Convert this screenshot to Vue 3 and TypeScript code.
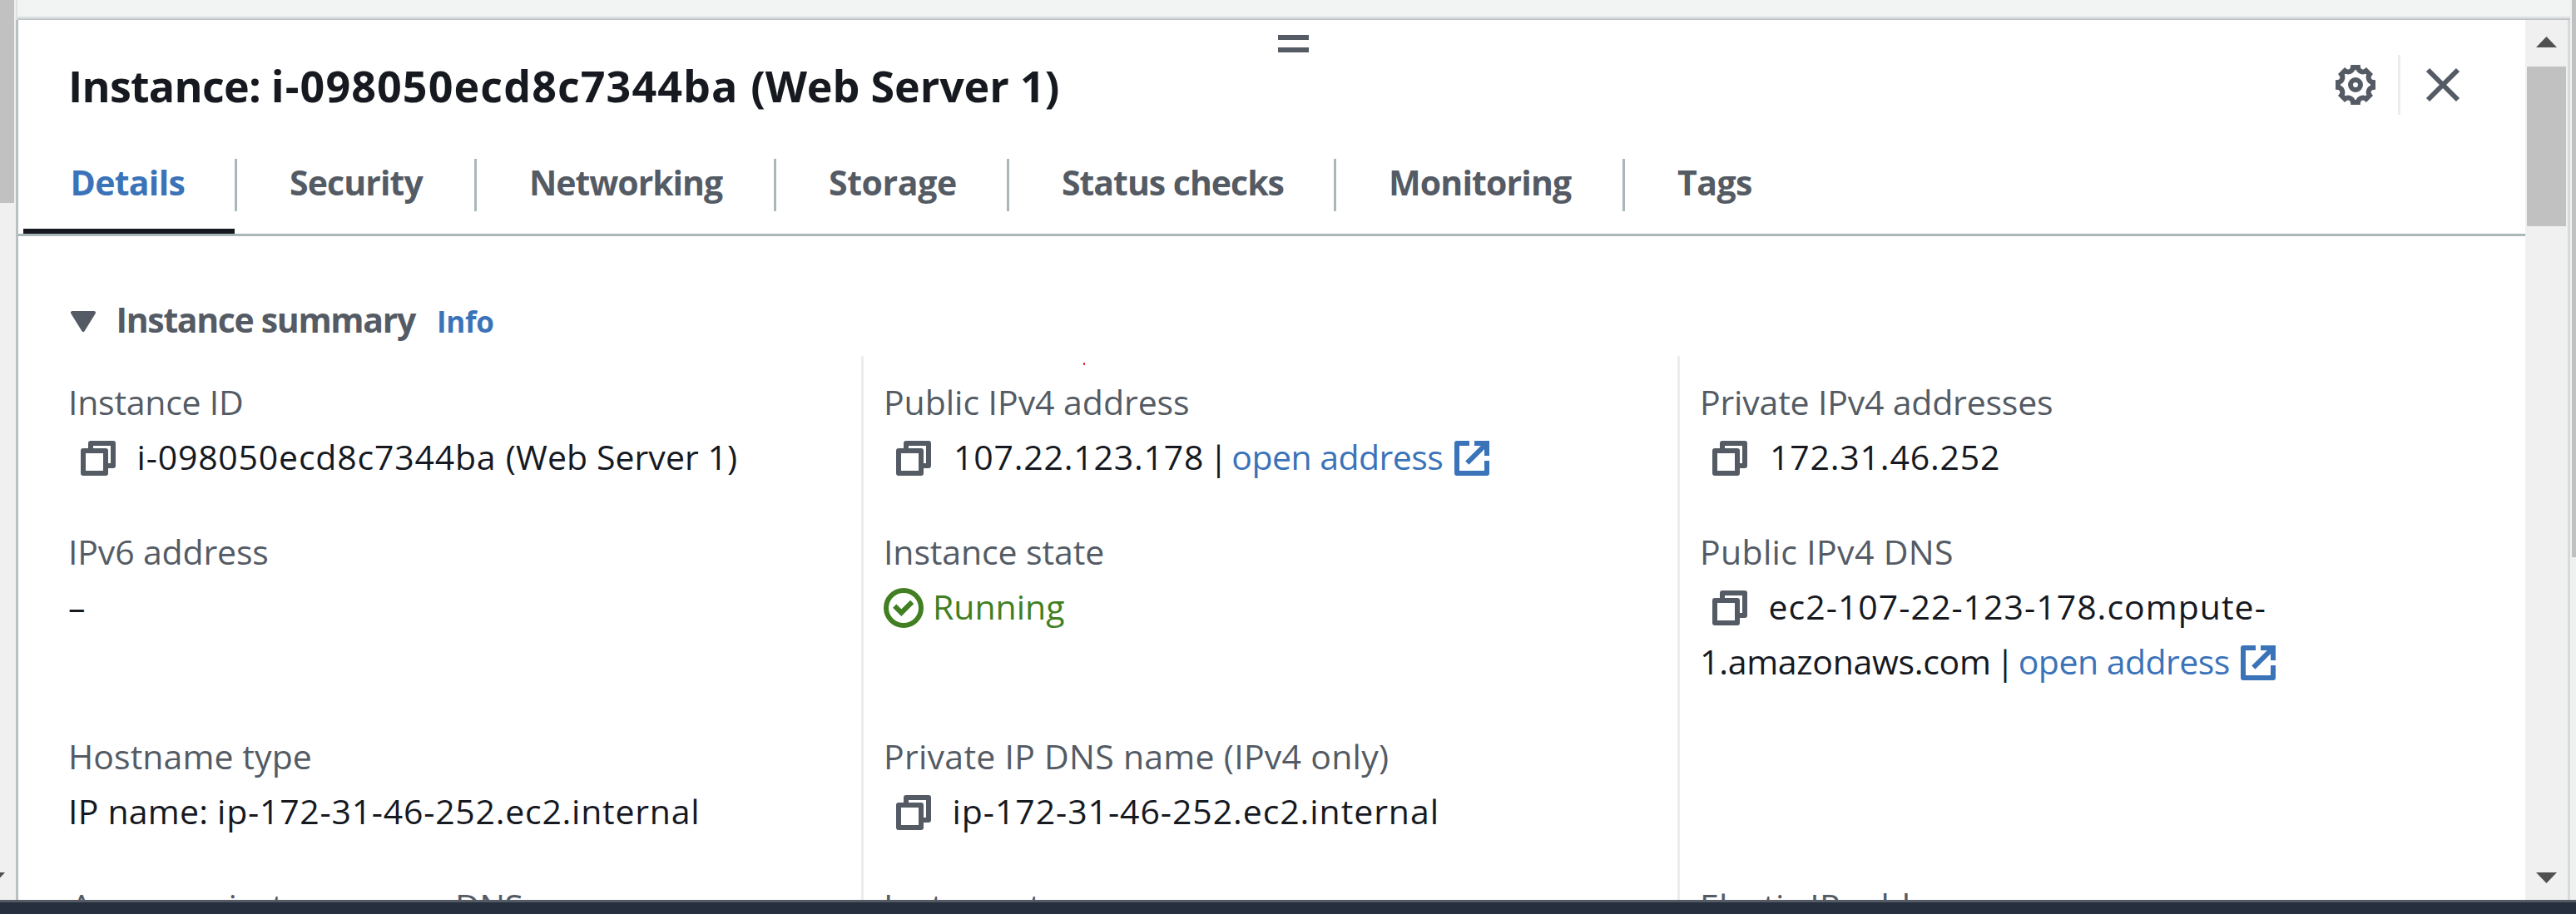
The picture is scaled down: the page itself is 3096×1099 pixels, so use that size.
<script setup lang="ts">
interface Tab { label: string; width: number; track: number; active?: boolean }
interface Run { text: string; track?: number }
interface Line { runs: Run[]; nudge?: number; link?: boolean }
interface Field { label: string; track?: number; nudge?: number; copy?: boolean; status?: boolean; lines: Line[] }

const title: Run[] = [
  { text: 'Instance: ', track: -0.74 },
  { text: 'i-098050ecd8c7344ba ', track: 1.09 },
  { text: '(Web Server 1)', track: -0.13 },
]

const tabs: Tab[] = [
  { label: 'Details', width: 254, track: -0.69, active: true },
  { label: 'Security', width: 285, track: -0.9 },
  { label: 'Networking', width: 357, track: -1.04 },
  { label: 'Storage', width: 277, track: -0.38 },
  { label: 'Status checks', width: 390, track: -1.01 },
  { label: 'Monitoring', width: 344, track: -0.85 },
  { label: 'Tags', width: 220, track: -0.56 },
]

const columns: Field[][] = [
  [
    {
      label: 'Instance ID', track: -0.25, copy: true,
      lines: [{ runs: [{ text: 'i-098050ecd8c7344ba ', track: 0.8 }, { text: '(Web Server 1)', track: 0.07 }] }],
    },
    { label: 'IPv6 address', track: -0.15, lines: [{ runs: [{ text: '–' }] }] },
    {
      label: 'Hostname type', track: 0.08,
      lines: [{ runs: [{ text: 'IP name: ', track: 0.22 }, { text: 'ip-172-31-46-252.ec2.internal', track: 0.75 }] }],
    },
    { label: 'Answer private resource DNS name', track: -0.57, nudge: 3, lines: [] },
  ],
  [
    { label: 'Public IPv4 address', track: -0.04, copy: true, lines: [{ runs: [{ text: '107.22.123.178', track: 0.79 }], nudge: 1.5, link: true }] },
    { label: 'Instance state', track: -0.1, status: true, lines: [{ runs: [{ text: 'Running', track: 0 }] }] },
    { label: 'Private IP DNS name (IPv4 only)', track: 0.27, copy: true, lines: [{ runs: [{ text: 'ip-172-31-46-252.ec2.internal', track: 0.93 }] }] },
    { label: 'Instance type', track: 0.3, lines: [] },
  ],
  [
    { label: 'Private IPv4 addresses', track: -0.18, copy: true, lines: [{ runs: [{ text: '172.31.46.252', track: 0.81 }], nudge: 1.5 }] },
    {
      label: 'Public IPv4 DNS', track: 0.34, copy: true,
      lines: [
        { runs: [{ text: 'ec2-107-22-123-178.compute-', track: 1.02 }] },
        { runs: [{ text: '1.amazonaws.com', track: -0.28 }], link: true },
      ],
    },
    { label: '', lines: [] },
    { label: 'Elastic IP addresses', track: 0.2, lines: [] },
  ],
]

const spacing = (track = 0, nudge = 0) => ({ letterSpacing: `${track}px`, marginLeft: nudge ? `${nudge}px` : undefined })

// Outline of an eight-toothed gear centred in a 48-unit box.
const turn = (x: number, y: number, deg: number) => {
  const a = (deg * Math.PI) / 180
  return `${(24 + x * Math.cos(a) - y * Math.sin(a)).toFixed(2)} ${(24 + x * Math.sin(a) + y * Math.cos(a)).toFixed(2)}`
}
const gear = Array.from({ length: 8 }, (_, k) => {
  const from = k === 0 ? `M${turn(-3, -21, 0)}` : ''
  return `${from}L${turn(3, -21, k * 45)}A6 6 0 0 0 ${turn(-3, -21, (k + 1) * 45)}`
}).join('') + 'Z'
</script>

<template>
  <div class="screen">
    <div class="main">
      <aside class="outer-scroll left">
        <div class="outer-thumb"></div>
        <svg class="outer-arrow" width="6" height="11" viewBox="0 0 6 11"><path d="M0 0H6L0 6.5Z" fill="#505050" /></svg>
      </aside>
      <section class="middle">
        <div class="strip"></div>
        <div class="panel">
          <div class="content">
            <div class="handle"><i></i><i></i></div>
            <header class="head">
              <h1><span v-for="(s, i) in title" :key="i" :style="spacing(s.track)">{{ s.text }}</span></h1>
              <div class="tools">
                <svg class="icon" viewBox="0 0 48 48" fill="none" stroke="currentColor" stroke-width="6">
                  <path :d="gear" />
                  <circle cx="24" cy="24" r="6" />
                </svg>
                <span class="bar"></span>
                <svg class="icon" viewBox="0 0 48 48" fill="none" stroke="currentColor" stroke-width="6">
                  <path d="M6 6L42 42M42 6L6 42" />
                </svg>
              </div>
            </header>
            <nav class="tabs">
              <div v-for="t in tabs" :key="t.label" class="tab" :class="{ active: t.active }" :style="{ width: t.width + 'px' }">
                <span :style="spacing(t.track)">{{ t.label }}</span>
              </div>
            </nav>
            <div class="summary">
              <svg class="caret" width="30" height="25" viewBox="0 0 30 25"><path d="M2 2H28L15 23Z" fill="currentColor" stroke="currentColor" stroke-width="4" stroke-linejoin="round" /></svg>
              <h2>Instance summary</h2>
              <a class="info">Info</a>
            </div>
            <div class="grid">
              <i class="speck"></i>
              <div v-for="(col, c) in columns" :key="c" class="col">
                <div v-for="(f, r) in col" :key="r" class="field">
                  <div class="label"><span :style="spacing(f.track, f.nudge)">{{ f.label }}</span></div>
                  <div v-for="(l, n) in f.lines" :key="n" class="value" :class="{ ok: f.status }">
                    <svg v-if="f.copy && n === 0" class="icon copy" viewBox="0 0 16 16" fill="none" stroke="currentColor" stroke-width="2" stroke-linejoin="round"><path d="M2 5h9v9H2zM5 4V2h9v9h-2" /></svg>
                    <svg v-if="f.status" class="icon check" viewBox="0 0 16 16" fill="none" stroke="currentColor" stroke-width="2"><circle cx="8" cy="8" r="7" /><path d="M4.4 7.2L7.1 9.9L11.4 5.6" /></svg>
                    <span class="text" :style="{ marginLeft: (l.nudge ?? 0) + 'px' }"><span v-for="(s, i) in l.runs" :key="i" :style="spacing(s.track)">{{ s.text }}</span></span>
                    <template v-if="l.link">
                      <span class="pipe">|</span>
                      <a class="open">open address</a>
                      <svg class="icon ext" viewBox="0 0 16 16" fill="none" stroke="currentColor" stroke-width="2"><path d="M7 2H2V14H14V9" stroke-linejoin="round" /><path d="M9 2h5v5M14 2L6.1 9.9" /></svg>
                    </template>
                  </div>
                </div>
              </div>
            </div>
          </div>
          <aside class="inner-scroll">
            <svg width="25" height="13" viewBox="0 0 25 13"><path d="M12.5 0L25 13H0Z" fill="#505050" /></svg>
            <div class="inner-thumb"></div>
            <svg class="down" width="25" height="13" viewBox="0 0 25 13"><path d="M0 0H25L12.5 13Z" fill="#505050" /></svg>
          </aside>
        </div>
      </section>
      <aside class="outer-scroll right"><div class="outer-thumb"></div></aside>
    </div>
    <footer></footer>
  </div>
</template>

<style>
html, body { margin: 0; overflow: hidden; }
</style>

<style scoped>
.screen { width: 3096px; height: 1099px; overflow: hidden; display: flex; flex-direction: column; font-family: "Open Sans", "Noto Sans", sans-serif; color: #16191f; background: #fff; }
.main { height: 1082px; display: flex; overflow: hidden; }
footer { height: 14px; border-top: 3px solid #545b64; background: #262f3d; }

.outer-scroll { background: #f0f0f0; flex: none; box-sizing: border-box; }
.outer-thumb { background: #c1c1c1; }
.left { width: 19px; padding-right: 2px; }
.left .outer-thumb { height: 244px; }
.outer-arrow { display: block; margin-top: 805px; }
.right { width: 7px; padding-left: 2px; }
.right .outer-thumb { height: 670px; }

.middle { width: 3070px; flex: none; }
.strip { height: 24px; box-sizing: border-box; border-left: 2px solid #dde1e2; background: linear-gradient(#f2f4f4 0 19px, #dcdfe0 21px, #c8cccf 23px, #b0b6b9 24px); }
.panel { display: flex; height: 1058px; border-left: 3px solid #b8c0c1; border-right: 3px solid #d5dadb; box-sizing: border-box; overflow: hidden; background: #fff; }
.content { width: 3013px; flex: none; }

.handle { height: 38px; padding: 18px 0 0 52px; box-sizing: border-box; display: flex; flex-direction: column; gap: 9px; align-items: center; }
.handle i { width: 37px; height: 6px; background: #545b64; flex: none; }

.head { height: 80px; display: flex; align-items: center; padding: 0 75px 0 60px; justify-content: space-between; }
h1 { font-size: 52px; line-height: 72px; margin: 2px 0 0; font-weight: 700; white-space: pre; }
.tools { display: flex; align-items: center; color: #545b64; }
.icon { width: 48px; height: 48px; flex: none; display: block; }
.bar { width: 3px; height: 72px; background: #eaeded; margin: 0 27px; }

.tabs { height: 115px; border-bottom: 3px solid #aab7b8; display: flex; padding-left: 6px; margin-top: 24px; }
.tab { position: relative; box-sizing: border-box; flex: none; height: 115px; padding: 20px 0 0 63px; font-size: 41px; line-height: 66px; font-weight: 700; color: #545b64; white-space: nowrap; margin-right: 3px; }
.tab:not(:last-child)::after { content: ""; position: absolute; right: -3px; top: 25px; width: 3px; height: 63px; background: #aab7b8; }
.tab.active { padding-left: 56.5px; color: #3b73b9; border-bottom: 6px solid #16191f; }

.summary { height: 144px; box-sizing: border-box; padding: 67px 0 0 63px; display: flex; align-items: baseline; }
.caret { color: #545b64; align-self: flex-start; margin-top: 23px; flex: none; }
h2 { margin: 0 0 0 24.5px; font-size: 41px; line-height: 66px; font-weight: 700; color: #545b64; letter-spacing: -1.34px; white-space: nowrap; }
.info { margin-left: 26px; font-size: 35px; line-height: 60px; font-weight: 700; color: #3b73b9; letter-spacing: -0.3px; }

.grid { position: relative; display: flex; height: 654px; overflow: hidden; }
.speck { position: absolute; left: 1280px; top: 8px; width: 2px; height: 3px; background: #e5303a; }
.col { box-sizing: border-box; flex: none; padding: 22px 0 0 24px; border-left: 3px solid #eaeded; width: 981px; display: grid; grid-template-rows: 132px 198px 132px 66px; row-gap: 48px; }
.col:nth-of-type(1) { width: 1013px; padding-left: 60px; border-left: 0; }
.label, .value { font-size: 41px; line-height: 66px; height: 66px; white-space: pre; display: flex; align-items: center; }
.label { color: #545b64; }
.value .icon { margin-top: 4px; }
.copy { margin: 0 22.5px 0 12px; color: #545b64; }
.check { margin: 0 11px 0 0; }
.ok { color: #417f22; }
.pipe { margin: 0 4.5px 0 6px; }
.open { color: #3b73b9; letter-spacing: -0.53px; }
.ext { margin-left: 10.5px; color: #3b73b9; }

.inner-scroll { width: 51px; flex: none; box-sizing: border-box; padding: 20px 0; background: #f0f0f0; display: flex; flex-direction: column; align-items: center; }
.inner-scroll svg { display: block; flex: none; }
.inner-thumb { width: 47px; height: 192px; margin-top: 23px; background: #c1c1c1; flex: none; }
.down { margin-top: auto; }
</style>
